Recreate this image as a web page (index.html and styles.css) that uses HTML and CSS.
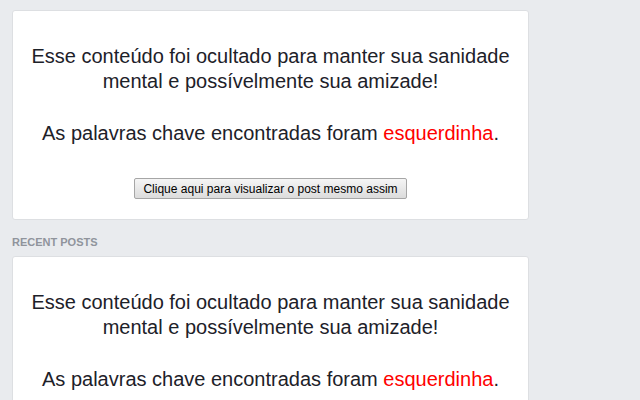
FILE: index.html
```html
<!DOCTYPE html>
<html lang="pt-BR">
<head>
    <meta charset="UTF-8">
    <title>Post ocultado</title>
    <link rel="stylesheet" href="styles.css">
</head>
<body>
    <div class="feed">
        <!-- Hidden post -->
        <div class="post">
            <p>Esse conteúdo foi ocultado para manter sua sanidade mental e possívelmente sua amizade!</p>
            <p>As palavras chave encontradas foram <span class="keyword">esquerdinha</span>.</p>
            <button class="show-button">Clique aqui para visualizar o post mesmo assim</button>
        </div>

        <h4 class="section-title">Recent Posts</h4>

        <div class="post">
            <p>Esse conteúdo foi ocultado para manter sua sanidade mental e possívelmente sua amizade!</p>
            <p>As palavras chave encontradas foram <span class="keyword">esquerdinha</span>.</p>
            <button class="show-button">Clique aqui para visualizar o post mesmo assim</button>
        </div>
    </div>
</body>
</html>
```

FILE: styles.css
```css
/* General Styles */
body {
    font-family: "Liberation Sans", Arial, sans-serif;
    background-color: #e9ebee;
    margin: 0;
    padding: 10px 12px;
}

.feed {
    width: 517px;
}

.post {
    background-color: #fff;
    border: 1px solid #dddfe2;
    border-radius: 3px;
    padding: 33px 16px 20px;
    text-align: center;
    color: #1d2129;
}

.post p {
    margin: 0 0 27px;
    font-size: 20px;
    line-height: 25px;
}

.keyword {
    color: #f00;
}

.show-button {
    margin-top: 5px;
    padding: 3px 8px 2px;
    font-family: "Liberation Sans", Arial, sans-serif;
    font-size: 12px;
    line-height: 14px;
    color: #000;
    background: linear-gradient(#f5f5f5, #dcdcdc);
    border: 1px solid #a6a6a6;
    border-radius: 2px;
    cursor: pointer;
}

.section-title {
    margin: 0;
    padding: 16px 0 8px;
    font-size: 11px;
    line-height: 12px;
    font-weight: bold;
    text-transform: uppercase;
    color: #90949c;
}
```
